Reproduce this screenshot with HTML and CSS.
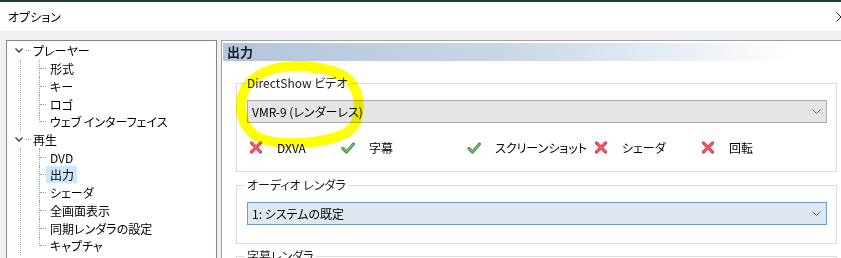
FILE: index.html
```html
<!DOCTYPE html>
<html lang="ja">

<head>
    <meta charset="UTF-8">
    <meta name="viewport" content="width=device-width, initial-scale=1.0">
    <title>オプション</title>
    <link rel="stylesheet" href="styles.css">
</head>

<body>
    <div class="window-edge"></div>

    <!-- タイトルバー -->
    <div class="titlebar">
        <span class="title">オプション</span>
        <svg class="close" width="10" height="10" viewBox="0 0 10 10">
            <path d="M0.5 0.5 L9.5 9.5 M9.5 0.5 L0.5 9.5" stroke="#222" stroke-width="1" fill="none" />
        </svg>
    </div>

    <div class="main">
        <!-- 左側ツリー -->
        <div class="tree">
            <ul class="tree-root">
                <li class="node">
                    <div class="node-row">
                        <svg class="chevron" width="8" height="5" viewBox="0 0 8 5">
                            <path d="M0.5 0.5 L4 4 L7.5 0.5" stroke="#3c3c3c" stroke-width="1.4" fill="none" />
                        </svg>
                        <span class="stub"></span>
                        <span class="label">プレーヤー</span>
                    </div>
                    <ul class="children">
                        <li><span class="label">形式</span></li>
                        <li><span class="label">キー</span></li>
                        <li><span class="label">ロゴ</span></li>
                        <li><span class="label">ウェブ インターフェイス</span></li>
                    </ul>
                </li>
                <li class="node">
                    <div class="node-row">
                        <svg class="chevron" width="8" height="5" viewBox="0 0 8 5">
                            <path d="M0.5 0.5 L4 4 L7.5 0.5" stroke="#3c3c3c" stroke-width="1.4" fill="none" />
                        </svg>
                        <span class="stub"></span>
                        <span class="label">再生</span>
                    </div>
                    <ul class="children">
                        <li><span class="label">DVD</span></li>
                        <li><span class="label selected">出力</span></li>
                        <li><span class="label">シェーダ</span></li>
                        <li><span class="label">全画面表示</span></li>
                        <li><span class="label">同期レンダラの設定</span></li>
                        <li><span class="label">キャプチャ</span></li>
                    </ul>
                </li>
            </ul>
        </div>

        <!-- 右側設定パネル -->
        <div class="panel">
            <div class="panel-header">出力</div>
            <div class="panel-body">
                <fieldset class="group">
                    <legend>DirectShow ビデオ</legend>
                    <div class="combo">
                        <span>VMR-9 (レンダーレス)</span>
                        <svg width="9" height="5" viewBox="0 0 9 5">
                            <path d="M0.5 0.5 L4.5 4.5 L8.5 0.5" stroke="#666" stroke-width="1" fill="none" />
                        </svg>
                    </div>
                    <div class="caps">
                        <div class="cap">
                            <svg class="icon" width="14" height="13" viewBox="0 0 14 13">
                                <path d="M2.5 2 L11.5 11 M11.5 2 L2.5 11" stroke="#e2444e" stroke-width="3.2" stroke-linecap="round" fill="none" />
                                <path d="M3 2.4 L11 10.6 M11 2.4 L3 10.6" stroke="#f37b83" stroke-width="1" stroke-linecap="round" fill="none" />
                            </svg>
                            <span>DXVA</span>
                        </div>
                        <div class="cap">
                            <svg class="icon" width="14" height="12" viewBox="0 0 14 12">
                                <path d="M2 6.5 L5.5 10 L12.5 2" stroke="#4a9c4e" stroke-width="3.2" stroke-linecap="round" stroke-linejoin="round" fill="none" />
                                <path d="M2.5 6.5 L5.5 9.4 L12 2.4" stroke="#8fd18f" stroke-width="1" stroke-linecap="round" fill="none" />
                            </svg>
                            <span>字幕</span>
                        </div>
                        <div class="cap">
                            <svg class="icon" width="14" height="12" viewBox="0 0 14 12">
                                <path d="M2 6.5 L5.5 10 L12.5 2" stroke="#4a9c4e" stroke-width="3.2" stroke-linecap="round" stroke-linejoin="round" fill="none" />
                                <path d="M2.5 6.5 L5.5 9.4 L12 2.4" stroke="#8fd18f" stroke-width="1" stroke-linecap="round" fill="none" />
                            </svg>
                            <span>スクリーンショット</span>
                        </div>
                        <div class="cap">
                            <svg class="icon" width="14" height="13" viewBox="0 0 14 13">
                                <path d="M2.5 2 L11.5 11 M11.5 2 L2.5 11" stroke="#e2444e" stroke-width="3.2" stroke-linecap="round" fill="none" />
                                <path d="M3 2.4 L11 10.6 M11 2.4 L3 10.6" stroke="#f37b83" stroke-width="1" stroke-linecap="round" fill="none" />
                            </svg>
                            <span>シェーダ</span>
                        </div>
                        <div class="cap">
                            <svg class="icon" width="14" height="13" viewBox="0 0 14 13">
                                <path d="M2.5 2 L11.5 11 M11.5 2 L2.5 11" stroke="#e2444e" stroke-width="3.2" stroke-linecap="round" fill="none" />
                                <path d="M3 2.4 L11 10.6 M11 2.4 L3 10.6" stroke="#f37b83" stroke-width="1" stroke-linecap="round" fill="none" />
                            </svg>
                            <span>回転</span>
                        </div>
                    </div>
                </fieldset>

                <fieldset class="group group-audio">
                    <legend>オーディオ レンダラ</legend>
                    <div class="combo combo-focus">
                        <span>1: システムの既定</span>
                        <svg width="9" height="5" viewBox="0 0 9 5">
                            <path d="M0.5 0.5 L4.5 4.5 L8.5 0.5" stroke="#666" stroke-width="1" fill="none" />
                        </svg>
                    </div>
                </fieldset>

                <fieldset class="group group-sub">
                    <legend>字幕レンダラ</legend>
                </fieldset>
            </div>
        </div>
    </div>

    <!-- 蛍光ペンの書き込み -->
    <svg class="marker" width="841" height="258" viewBox="0 0 841 258">
        <path d="M342 77 C322 62, 272 61, 251 81 C236 96, 238 124, 256 136 C275 147, 322 145, 346 133 C363 123, 362 94, 349 80 C341 72, 326 68, 312 68"
            stroke="#ffff00" stroke-width="10" stroke-linecap="round" fill="none" />
    </svg>
</body>

</html>
```

FILE: styles.css
```css
/* 全体 */
html,
body {
    margin: 0;
}

body {
    position: relative;
    width: 841px;
    height: 258px;
    overflow: hidden;
    background-color: #f0f0f0;
    font-family: "Noto Sans CJK JP", sans-serif;
    font-size: 12px;
    font-feature-settings: "palt";
    color: #000;
}

.window-edge {
    height: 2px;
    background-color: #1e3a3e;
}

/* タイトルバー */
.titlebar {
    display: flex;
    align-items: center;
    justify-content: space-between;
    height: 29px;
    padding-left: 8px;
    background-color: #fff;
}

.close {
    margin-right: -5px;
}

.main {
    display: grid;
    grid-template-columns: 211px 1fr;
    column-gap: 4px;
    padding: 9px 0 0 6px;
}

/* ツリー */
.tree {
    height: 240px;
    border: 1px solid #828790;
    background-color: #fff;
}

.tree ul {
    list-style: none;
    margin: 0;
    padding: 0;
}

.tree-root {
    padding-top: 1px !important;
}

.node-row {
    display: flex;
    align-items: center;
    height: 17.73px;
    padding-left: 8px;
}

.chevron {
    margin-right: 3px;
}

.stub {
    width: 5px;
    border-top: 1px dotted #a0a0a0;
    margin-right: 2px;
}

.children {
    margin-left: 13px !important;
    border-left: 1px dotted #a0a0a0;
}

.children li {
    display: flex;
    align-items: center;
    height: 17.73px;
    margin-left: 18px;
    border-left: 1px dotted #a0a0a0;
}

.children li:last-child {
    border-left: none;
    padding-left: 1px;
    background: repeating-linear-gradient(to bottom, #a0a0a0 0 1px, transparent 1px 2px) no-repeat left top / 1px 50%;
}

.children li::before {
    content: "";
    width: 6px;
    border-top: 1px dotted #a0a0a0;
}

.children li .label {
    padding: 0 3px 0 4px;
    line-height: 17px;
}

.label.selected {
    background-color: #cce8ff;
}

/* 右側パネル */
.panel {
    height: 240px;
    border-top: 1px solid #a0a0a0;
    border-left: 1px solid #a0a0a0;
    background-color: #fff;
    padding: 2px 0 0 1px;
}

.panel-header {
    height: 18px;
    line-height: 18px;
    padding-left: 4px;
    font-size: 13px;
    font-weight: 700;
    color: #1a1a1a;
    background: linear-gradient(to right, #b3c5db 0%, #c9d6e6 45%, #e6edf5 72%, #ffffff 92%);
}

.panel-body {
    padding-left: 13px;
}

.group {
    box-sizing: border-box;
    width: 601px;
    margin: 14px 0 0 0;
    padding: 9px 9px 16px 10px;
    border: 1px solid #dcdcdc;
}

.group legend {
    margin-left: -2px;
    padding: 0 2px;
    line-height: 16px;
    color: #1a1a1a;
}

.group-audio {
    margin-top: 5px;
    padding-bottom: 18px;
}

.group-sub {
    margin-top: 4px;
    height: 40px;
}

/* コンボボックス */
.combo {
    box-sizing: border-box;
    display: flex;
    align-items: center;
    justify-content: space-between;
    height: 23px;
    padding: 0 5px 0 4px;
    border: 1px solid #acacac;
    background-color: #e5e5e5;
}

.combo-focus {
    border-color: #6f9cc6;
    background-color: #dfe8f1;
}

/* 機能アイコン */
.caps {
    display: grid;
    grid-template-columns: 92px 126px 127px 107px auto;
    height: 16px;
    margin-top: 16px;
    padding-left: 2px;
}

.cap {
    display: flex;
    align-items: center;
}

.cap .icon {
    margin-right: 14px;
}

/* 書き込み */
.marker {
    position: absolute;
    left: 0;
    top: 0;
    pointer-events: none;
    mix-blend-mode: multiply;
}
```
